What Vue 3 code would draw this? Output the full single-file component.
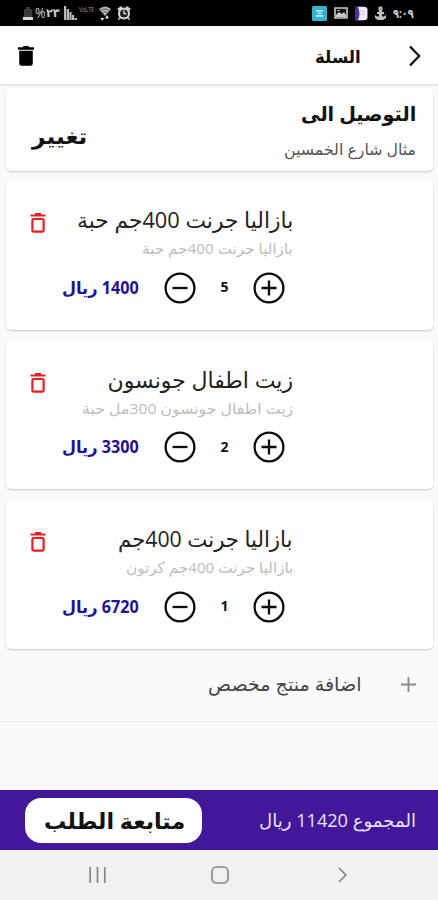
<template>
  <div class="cart-page" dir="rtl">
    <!-- Status bar -->
    <div class="status-bar" dir="ltr">
      <div class="status-group status-left">
        <svg class="battery" viewBox="0 0 10 15" width="10" height="15">
          <path d="M3 1h4v2h2v8H1V3h2z" fill="#3b3b3b" />
          <path d="M0 11h10v3H0z" fill="#d8d8d8" />
        </svg>
        <span v-fit="11" class="percent">%</span>
        <span v-fit="14" class="level">٢٣</span>
        <svg class="signal" viewBox="0 0 13 14" width="13" height="14">
          <path d="M0 0h2.2v14H0zM2.7 3H5v11H2.7zM5.4 6h2.2v8H5.4zM8 9h2.2v5H8zM10.6 12H13v2h-2.4z" fill="#b9b9b9" />
        </svg>
        <span v-fit="15" class="volte">VoLTE</span>
        <svg class="wifi" viewBox="0 0 12 15" width="12" height="15">
          <path d="M0 3q6-5 12 0L6 10z" fill="#b4b4b4" />
          <path d="M2 4q4-2 8 0M4 6.2q2-1 4 0" fill="none" stroke="#444" stroke-width=".7" />
          <path d="M1.3 12h4L3.3 14.8zM6 12.5L8 9l2 3.5z" fill="#e4e4e4" />
        </svg>
        <svg class="alarm" viewBox="0 0 14 14" width="14" height="14">
          <path d="M0 3L4 0l1.5 1.5L2 5zM14 3l-4-3-1.5 1.5L12 5zM2 11l2 1-2 2H1zM12 11l-2 1 2 2h1z" fill="#ccc" />
          <circle cx="7" cy="7.4" r="5" fill="#222" stroke="#ddd" stroke-width="2" />
          <path d="M7 4.2v3.5h2.4" fill="none" stroke="#eee" stroke-width="1.2" />
        </svg>
      </div>
      <div class="status-group status-right">
        <svg viewBox="0 0 15 15" width="15" height="15">
          <rect width="15" height="15" rx="1.5" fill="#35b2d0" />
          <path d="M4 4h7v1.5H4zM5.5 6.5h4V8h-4zM4 9h7v1.8H4z" fill="#bdeaf4" />
        </svg>
        <svg viewBox="0 0 14 12" width="14" height="12">
          <path d="M1 1h12v10H1z" fill="#111" stroke="#c9c9c9" stroke-width="1.6" />
          <path d="M2 8l3-3 3 2 2-2 2 3v2H2z" fill="#c9c9c9" />
          <path d="M3 3h3v1H3z" fill="#aaa" />
        </svg>
        <svg viewBox="0 0 13 15" width="13" height="15">
          <rect width="10" height="15" rx="2" fill="#51309b" />
          <path d="M3 1h8l1.5 2v9L11 14H3q3-6 0-13z" fill="#f1eef6" />
          <path d="M5 5h5M5 8h5" stroke="#cfc6e2" stroke-width="1" />
        </svg>
        <svg viewBox="0 0 11 14" width="11" height="14">
          <path d="M5.5 1v11" stroke="#bbb" stroke-width="3.4" />
          <circle cx="5.5" cy="2.5" r="2.2" fill="#aaa" />
          <path d="M2 6h7v2H2zM0 9l2 1.5h7L11 9v3l-3 2H3l-3-2z" fill="#c4c4c4" />
        </svg>
        <span v-fit="21" class="clock">٩:٠٩</span>
      </div>
    </div>

    <!-- App bar -->
    <header class="app-bar">
      <svg class="back" viewBox="0 0 14 22" width="14" height="22">
        <path d="M2 1.5L11.2 11 2 20.5" fill="none" stroke="#111" stroke-width="2.3" />
      </svg>
      <h1 class="page-title"><span v-fit="46">السلة</span></h1>
      <svg class="clear" viewBox="0 0 16 20" width="16" height="20">
        <path d="M0 1.3h4.5L5.7 0h4.6l1.2 1.3H16v2.4H0zM1.2 4.8h13.6v12.7q0 2.3-2.3 2.3h-9q-2.3 0-2.3-2.3z" fill="#000" />
      </svg>
    </header>

    <!-- Delivery address -->
    <section class="card address">
      <div class="address-text">
        <div class="address-title"><span v-fit="115">التوصيل الى</span></div>
        <div class="address-value"><span v-fit="132">مثال شارع الخمسين</span></div>
      </div>
      <button class="change"><span v-fit="55">تغيير</span></button>
    </section>

    <!-- Cart items -->
    <section v-for="item in items" :key="item.id" class="card item">
      <div class="item-head">
        <div class="item-text">
          <div class="item-name"><span v-fit="item.nameWidth">{{ item.name }}</span></div>
          <div class="item-note"><span v-fit="item.noteWidth">{{ item.note }}</span></div>
        </div>
        <button class="icon-button" @click="remove(item)">
          <svg viewBox="0 0 16 20" width="16" height="20">
            <path d="M.5 2.5h15M5 1.1h6" fill="none" stroke="#ee1c1c" stroke-width="2.2" />
            <rect x="2.4" y="6" width="11.2" height="12.6" rx="1" fill="none" stroke="#ee1c1c" stroke-width="2.2" />
          </svg>
        </button>
      </div>
      <div class="item-foot">
        <button class="icon-button" @click="item.count++">
          <svg viewBox="0 0 32 32" width="32" height="32">
            <circle cx="16" cy="16" r="14.4" fill="none" stroke="#0b0b0b" stroke-width="2.3" />
            <path d="M8.5 16h15M16 8.5v15" stroke="#0b0b0b" stroke-width="2.3" />
          </svg>
        </button>
        <span class="count">{{ item.count }}</span>
        <button class="icon-button" @click="decrease(item)">
          <svg viewBox="0 0 32 32" width="32" height="32">
            <circle cx="16" cy="16" r="14.4" fill="none" stroke="#0b0b0b" stroke-width="2.3" />
            <path d="M8.5 16h15" stroke="#0b0b0b" stroke-width="2.3" />
          </svg>
        </button>
        <div class="price"><span v-fit="77">{{ item.price * item.count }} ريال</span></div>
      </div>
    </section>

    <!-- Custom product -->
    <div class="add-row">
      <svg viewBox="0 0 15 15" width="15" height="15">
        <path d="M0 7.5h15M7.5 0v15" stroke="#8b8b8b" stroke-width="1.9" />
      </svg>
      <div class="add-label"><span v-fit="153">اضافة منتج مخصص</span></div>
    </div>

    <!-- Checkout -->
    <footer class="checkout">
      <div class="total"><span v-fit="157">المجموع {{ total }} ريال</span></div>
      <button class="proceed"><span v-fit="141">متابعة الطلب</span></button>
    </footer>

    <nav class="system-nav">
      <svg viewBox="0 0 10 18" width="10" height="18">
        <path d="M1 2l6.8 7L1 16" fill="none" stroke="#868686" stroke-width="1.7" />
      </svg>
      <svg class="home" viewBox="0 0 18 18" width="18" height="18">
        <rect x="1" y="1" width="16" height="16" rx="4.5" fill="none" stroke="#868686" stroke-width="1.6" />
      </svg>
      <svg viewBox="0 0 17 16" width="17" height="16">
        <path d="M1.2 0v16M8.5 0v16M15.8 0v16" stroke="#868686" stroke-width="1.7" />
      </svg>
    </nav>
  </div>
</template>

<script setup>
import { ref, computed } from 'vue'

const items = ref([
  { id: 1, name: 'بازاليا جرنت 400جم حبة', note: 'بازاليا جرنت 400جم حبة', price: 280, count: 5, nameWidth: 216, noteWidth: 151 },
  { id: 2, name: 'زيت اطفال جونسون', note: 'زيت اطفال جونسون 300مل حبة', price: 1650, count: 2, nameWidth: 185, noteWidth: 211 },
  { id: 3, name: 'بازاليا جرنت 400جم', note: 'بازاليا جرنت 400جم كرتون', price: 6720, count: 1, nameWidth: 175, noteWidth: 167 }
])

const total = computed(() => items.value.reduce((sum, item) => sum + item.price * item.count, 0))

const decrease = (item) => {
  if (item.count > 1) item.count--
}

const remove = (item) => {
  items.value = items.value.filter((i) => i.id !== item.id)
}

// Condense or widen a label so that it takes exactly the given width
const fit = (el, { value }) => {
  el.style.transform = 'none'
  const natural = el.offsetWidth
  if (!natural) return
  el.style.transform = `scaleX(${value / natural})`
  const side = getComputedStyle(el).direction === 'rtl' ? 'marginLeft' : 'marginRight'
  el.style[side] = `${value - natural}px`
}

const vFit = {
  mounted: (el, binding) => {
    el.classList.add('fit')
    fit(el, binding)
  },
  updated: fit
}
</script>

<style>
body {
  background: #fafafa;
}

.fit {
  display: inline-block;
  white-space: nowrap;
}

[dir='rtl'] .fit {
  transform-origin: right center;
}

[dir='ltr'] .fit {
  transform-origin: left center;
}
</style>

<style scoped>
.cart-page {
  box-sizing: border-box;
  display: flex;
  flex-direction: column;
  width: 438px;
  height: 900px;
  overflow: hidden;
  background: #fafafa;
  color: #111;
  font-family: 'Open Sans', 'DejaVu Sans', sans-serif;
}

button {
  margin: 0;
  padding: 0;
  border: 0;
  background: none;
  color: inherit;
  font: inherit;
  cursor: pointer;
}

svg {
  display: block;
  flex: none;
}

.status-bar {
  display: flex;
  justify-content: space-between;
  flex: none;
  box-sizing: border-box;
  height: 26px;
  padding: 0 24px 0 23px;
  background: #000;
  color: #ccc;
  font-size: 14px;
  line-height: 26px;
}

.status-group {
  display: flex;
  align-items: center;
}

.percent {
  margin-left: 2px;
}

.level {
  font-size: 12px;
  font-weight: 700;
}

.signal {
  margin-left: 5px;
}

.volte {
  margin-left: 2px;
  color: #666;
  font-size: 7px;
  font-weight: 700;
  line-height: 20px;
  align-self: flex-start;
}

.wifi {
  margin-left: 5px;
}

.alarm {
  margin-left: 6px;
}

.status-right {
  gap: 7px;
}

.clock {
  font-size: 13px;
  font-weight: 700;
}

.app-bar {
  display: flex;
  align-items: center;
  flex: none;
  box-sizing: border-box;
  height: 60px;
  padding: 1px 16px 0 18px;
  border-bottom: 2px solid #e8e8e8;
  background: #fff;
}

.page-title {
  margin: 2px 47px 0 auto;
  font-size: 17px;
  line-height: 30px;
}

.card {
  flex: none;
  box-sizing: border-box;
  margin: 0 5px 0 6px;
  border-radius: 5px;
  background: #fff;
  box-shadow: 0 1px 2px rgba(0, 0, 0, 0.2);
}

.address {
  display: flex;
  align-items: center;
  justify-content: space-between;
  height: 83px;
  margin-top: 2px;
  padding: 4px 17px 0 26px;
}

.address-title {
  font-size: 20px;
  font-weight: 700;
  line-height: 34px;
}

.address-value {
  color: #555;
  font-size: 16px;
  line-height: 36px;
}

.change {
  padding-top: 7px;
  font-size: 22px;
  font-weight: 600;
  line-height: 30px;
}

.item {
  height: 148.5px;
  margin-top: 11px;
  padding: 18px 140px 0 24px;
}

.address + .item {
  margin-top: 10px;
}

.item-head {
  display: flex;
  align-items: flex-start;
  justify-content: space-between;
}

.item-head .icon-button {
  margin-top: 14px;
}

.item-name {
  color: #222;
  font-size: 22px;
  line-height: 40px;
}

.item-note {
  color: #bdbdbd;
  font-size: 15px;
  line-height: 18px;
}

.item-foot {
  display: flex;
  align-items: center;
  height: 32px;
  margin-top: 14.5px;
  padding-right: 8px;
}

.count {
  width: 57px;
  margin-top: -2px;
  font-size: 14px;
  font-weight: 700;
  text-align: center;
}

.price {
  margin-right: 25px;
  margin-top: -1px;
  color: #26118f;
  font-size: 17px;
  font-weight: 700;
}

.add-row {
  display: flex;
  align-items: center;
  flex: none;
  box-sizing: border-box;
  height: 73px;
  padding-right: 22px;
  padding-bottom: 1px;
  border-bottom: 1px solid #ebebeb;
}

.add-label {
  margin-right: 40px;
  color: #444;
  font-size: 19px;
}

.checkout {
  display: flex;
  align-items: center;
  justify-content: space-between;
  flex: none;
  box-sizing: border-box;
  height: 60px;
  margin-top: auto;
  padding: 0 22px 0 25px;
  background: #421799;
}

.total {
  color: #e9e2f6;
  font-size: 18px;
}

.proceed {
  width: 177px;
  height: 45px;
  padding-left: 2px;
  border-radius: 16px;
  background: #fff;
  font-size: 22px;
  font-weight: 700;
}

.system-nav {
  display: flex;
  align-items: center;
  justify-content: space-between;
  flex: none;
  box-sizing: border-box;
  height: 50px;
  padding: 0 90px 0 89px;
  background: #f1f1f1;
}

.home {
  margin-left: 4px;
}

.system-nav .home {
  margin: 0 4px 0 0;
}
</style>
